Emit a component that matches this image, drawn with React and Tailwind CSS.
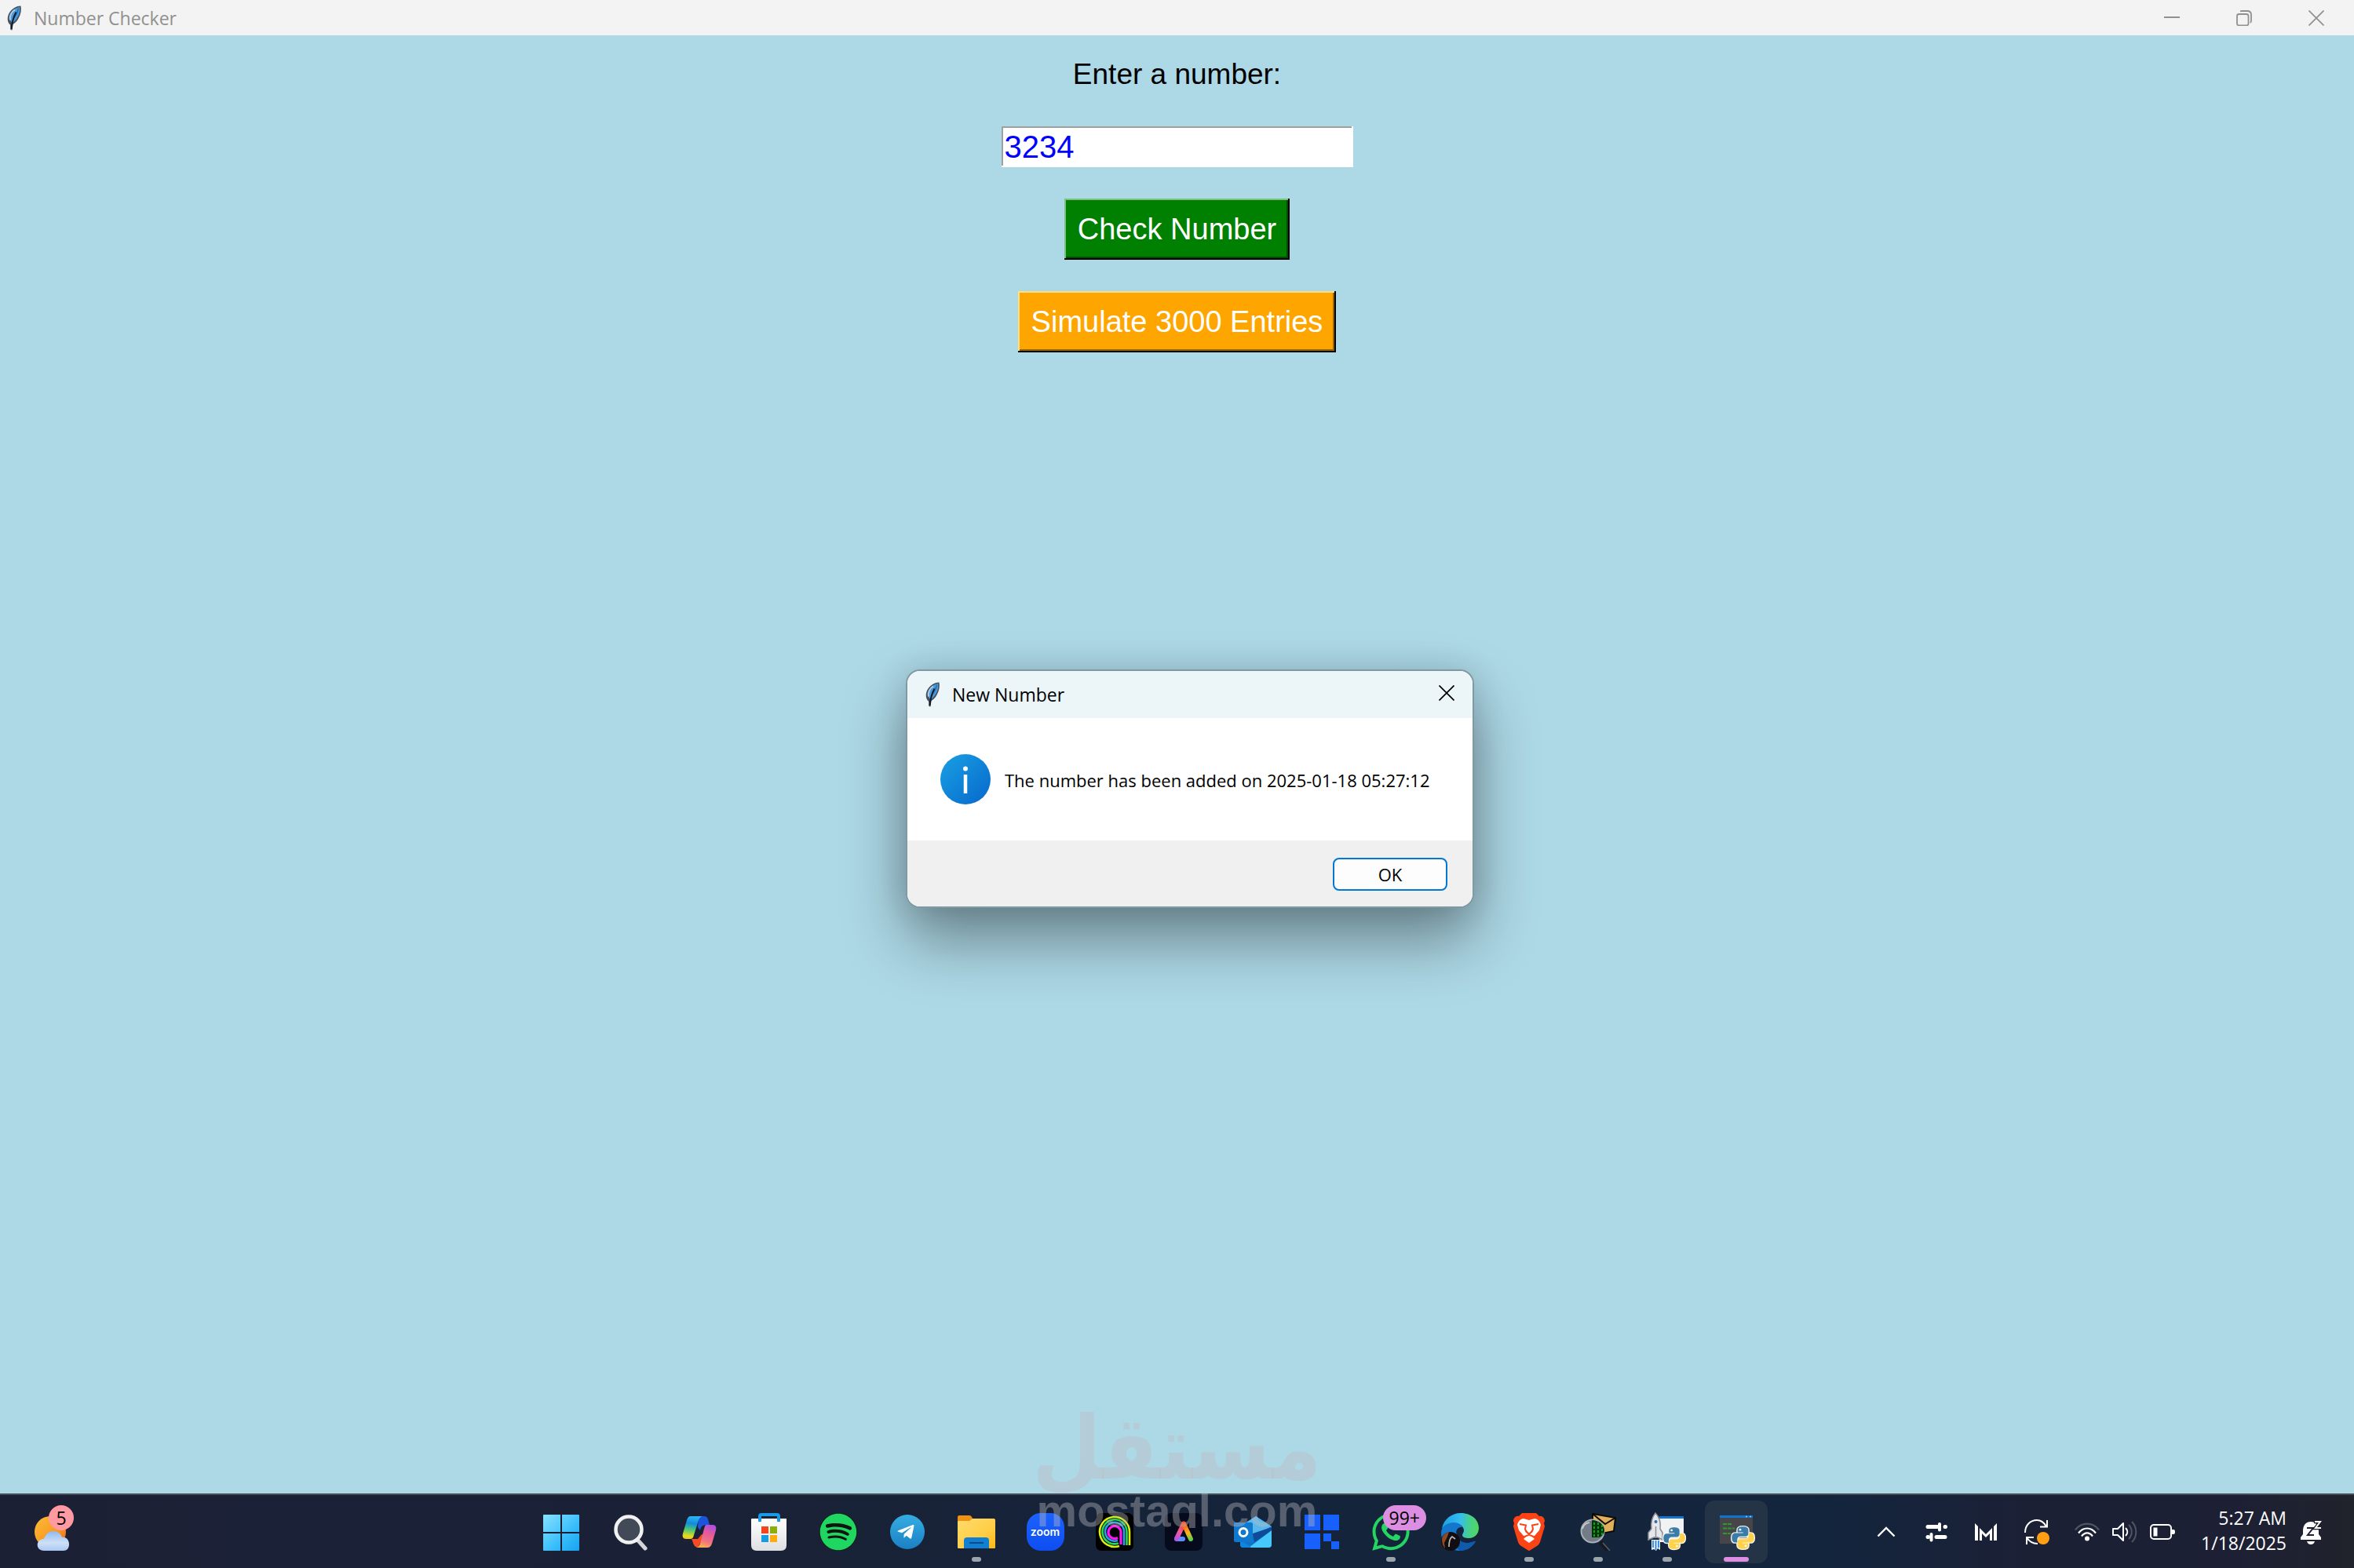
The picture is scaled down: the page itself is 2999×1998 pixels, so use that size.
import { useState } from 'react';
import { FaSpotify, FaTelegramPlane, FaWhatsapp } from 'react-icons/fa';

function Feather() {
  return (
    <svg className="h-8 w-5 shrink-0" viewBox="0 0 20 32" aria-hidden="true">
      <path d="M18.500 0.500c1 5 0 11-3 16-1.500 3-4 6-7 7.500L7.500 31.500l-2-.5-.5-6.500C1.500 22 .8 16 3 11 6 5 12 .5 18.500.5z" fill="#46505e" />
      <path d="M17 2c.8 5-.5 9.500-3 13.500-1.500 3-3.500 5-6 6.500C4.500 20 2.500 16 4.500 11.500 7 6 12 3 17 2z" fill="#4a9bdd" />
      <path d="M11 5.500c-4 2.500-7 7.500-6 13" stroke="#b9cbdc" strokeWidth="2" fill="none" />
      <path d="M15.500 3.500c-1 5-3 9-5.500 12" stroke="#2a70b4" strokeWidth="1.500" fill="none" />
      <path d="M12.500 8.500C9.500 14 7.500 20 6.500 30" stroke="#121a26" strokeWidth="2" fill="none" />
    </svg>
  );
}

function CloseIcon() {
  return (
    <svg className="h-5 w-5" viewBox="0 0 20 20" stroke="currentColor" strokeWidth="1.700" aria-hidden="true">
      <path d="M0.500 0.500l19 19M19.500 0.500l-19 19" />
    </svg>
  );
}

function Python({ x, y, size }) {
  const half = 'M12 0C8 0 6.200 1.200 6.200 3.500V6h6v1H3.800C1.200 7 0 9 0 12s1.200 5 3.400 5h2.400v-3c0-2 1.600-3.400 3.500-3.400h5.500c1.700 0 3-1.300 3-3V3.500C17.800 1.200 15.500 0 12 0z';
  return (
    <svg x={x} y={y} width={size} height={size} viewBox="-2 -2 28 28">
      <g fill="#fff" stroke="#f2f2ee" strokeWidth="2.500" strokeLinejoin="round">
        <path d={half} />
        <path d={half} transform="rotate(180 12 12)" />
      </g>
      <path d={half} fill="#3b7ba8" />
      <path d={half} transform="rotate(180 12 12)" fill="#ffd24a" />
      <circle cx="9" cy="3.200" r="1.200" fill="#fff" />
      <circle cx="15" cy="20.800" r="1.200" fill="#fff" />
    </svg>
  );
}

function StartIcon() {
  return (
    <svg className="h-12 w-12" viewBox="0 0 48 48">
      <defs>
        <linearGradient id="start" x1="0" y1="0" x2="48" y2="48" gradientUnits="userSpaceOnUse">
          <stop stopColor="#8be3ff" />
          <stop offset=".6" stopColor="#38bdfb" />
          <stop offset="1" stopColor="#16a2ee" />
        </linearGradient>
      </defs>
      <path d="M0 3q0-1 1-1h21v22H0zM24 2h21q1 0 1 1v21H24zM0 26h22v22H1q-1 0-1-1zM24 26h22v21q0 1-1 1H24z" fill="url(#start)" />
    </svg>
  );
}

function SearchIcon() {
  return (
    <svg className="h-12 w-12" viewBox="0 0 48 48">
      <path d="M33 35l9 10" stroke="#d3d5d8" strokeWidth="5" strokeLinecap="round" />
      <circle cx="21" cy="21" r="16.500" fill="#424a58" stroke="#f1f1f2" strokeWidth="4.500" />
    </svg>
  );
}

function CopilotIcon() {
  return (
    <svg className="h-12 w-12" viewBox="0 0 48 48">
      <defs>
        <linearGradient id="copA" x1="12" y1="4" x2="8" y2="34" gradientUnits="userSpaceOnUse">
          <stop stopColor="#2db4f2" />
          <stop offset=".3" stopColor="#118bdc" />
          <stop offset=".55" stopColor="#47c47c" />
          <stop offset=".85" stopColor="#e6dc1c" />
          <stop offset="1" stopColor="#f8b52b" />
        </linearGradient>
        <linearGradient id="copB" x1="40" y1="15" x2="30" y2="44" gradientUnits="userSpaceOnUse">
          <stop stopColor="#a64fe8" />
          <stop offset=".4" stopColor="#e65b97" />
          <stop offset=".75" stopColor="#f07580" />
          <stop offset="1" stopColor="#fdaa51" />
        </linearGradient>
      </defs>
      <path d="M22 4h7c3 0 4 1 5 4l2 7h-4c-5 0-7 2-8 7l-3-4z" fill="#1a55dc" />
      <path d="M13 33h8l5-6 3 2-8 15c-4-1-5-3-6-6l-1-3z" fill="#fb4a23" />
      <path d="M12 4h16c-3 0-5 2-6 5l-6 19c-1 4-2 5-5 5H6c-4 0-5-3-4-7L7 9c1-3 2-5 5-5z" fill="url(#copA)" />
      <path d="M32 15h8c4 0 5 3 4 7l-5 17c-1 3-3 5-6 5H18c3 0 5-2 6-5l5-19c1-3 1-5 3-5z" fill="url(#copB)" />
    </svg>
  );
}

function StoreIcon() {
  return (
    <svg className="h-12 w-12" viewBox="0 0 48 48">
      <defs>
        <linearGradient id="store" x1="0" y1="0" x2="0" y2="1">
          <stop stopColor="#fff" />
          <stop offset="1" stopColor="#dedfe1" />
        </linearGradient>
      </defs>
      <path d="M2 7h44v34q0 7-7 7H8q-7 0-7-7V8q0-1 1-1z" fill="url(#store)" />
      <path d="M12 11V4q0-2 2-2h20q2 0 2 2v7" fill="none" stroke="#1a9be6" strokeWidth="4" />
      <path d="M14 17h9v9h-9z" fill="#f5441f" />
      <path d="M25 17h9v9h-9z" fill="#8cae08" />
      <path d="M14 28h9v9h-9z" fill="#149de4" />
      <path d="M25 28h9v9h-9z" fill="#ffac0a" />
    </svg>
  );
}

function SpotifyIcon() {
  return (
    <span className="flex h-12 w-12 rounded-full bg-[#0e1410]">
      <FaSpotify size={48} color="#1fd660" />
    </span>
  );
}

function TelegramIcon() {
  return (
    <span className="flex h-11 w-11 items-center justify-center rounded-full bg-linear-to-b from-[#35ade2] to-[#1b80c4]">
      <FaTelegramPlane className="mr-1 h-6 w-6 text-white" />
    </span>
  );
}

function FolderIcon() {
  return (
    <svg className="h-12 w-12" viewBox="0 0 48 48">
      <defs>
        <linearGradient id="folder" x1="0" y1="0" x2="1" y2="1">
          <stop stopColor="#ffda6b" />
          <stop offset=".6" stopColor="#ffce47" />
          <stop offset="1" stopColor="#fbb714" />
        </linearGradient>
      </defs>
      <path d="M0 5q0-2 2-2h13q2 0 3 2l2 4v4H0z" fill="#f0920f" />
      <path d="M0 11q0-1 2-1h13l4-3h27q2 0 2 2v35q0 1-1 1H1q-1 0-1-1z" fill="url(#folder)" />
      <path d="M8 45V35q0-4 4-4h24q4 0 4 4v10z" fill="#1180d2" />
      <path d="M15 38h18" stroke="#0c4b87" strokeWidth="2" />
    </svg>
  );
}

function ZoomIcon() {
  return (
    <span className="flex h-12 w-12 items-center justify-center rounded-[18px] bg-linear-to-b from-[#1c62ff] to-[#0f4df0] font-['Inter'] text-[14px] leading-5 font-semibold text-white">
      zoom
    </span>
  );
}

function RingsIcon() {
  return (
    <svg className="h-12 w-12" viewBox="0 0 48 48" fill="none" strokeWidth="2.600">
      <rect width="48" height="48" rx="7" fill="#000" />
      <path d="M43 41V24A19 19 0 1 0 30 42" stroke="#d9ee13" />
      <path d="M39.500 41V24A15.500 15.500 0 1 0 29 38.500" stroke="#27d65b" />
      <path d="M36 41V24A12 12 0 1 0 28 35" stroke="#2b9fee" />
      <path d="M32 40V24a8 8 0 1 0-4 7.500" stroke="#fb16f2" strokeWidth="3.200" />
    </svg>
  );
}

function AdobeIcon() {
  return (
    <svg className="h-12 w-12" viewBox="0 0 48 48">
      <defs>
        <linearGradient id="adobeL" x1="24" y1="12" x2="14" y2="36" gradientUnits="userSpaceOnUse">
          <stop stopColor="#f63b1d" />
          <stop offset=".5" stopColor="#ef5b9c" />
          <stop offset="1" stopColor="#b54bf5" />
        </linearGradient>
        <linearGradient id="adobeR" x1="24" y1="12" x2="34" y2="36" gradientUnits="userSpaceOnUse">
          <stop stopColor="#fb3d16" />
          <stop offset=".55" stopColor="#fbb41c" />
          <stop offset="1" stopColor="#3ed256" />
        </linearGradient>
      </defs>
      <rect width="48" height="48" rx="8" fill="#050b1c" />
      <path d="M15 33h8" stroke="#5b8ffa" strokeWidth="6" strokeLinecap="round" />
      <path d="M24 13.500l-9 19" stroke="url(#adobeL)" strokeWidth="6" strokeLinecap="round" />
      <path d="M24 13.500l9 19.500" stroke="url(#adobeR)" strokeWidth="6" strokeLinecap="round" />
    </svg>
  );
}

function OutlookIcon() {
  return (
    <svg className="h-12 w-12" viewBox="0 0 48 48">
      <path d="M28 4l20 13v23q0 4-4 4H12q-4 0-4-4V17z" fill="#1272c8" />
      <path d="M28 4L9 16l17 12 22-11z" fill="#56b8ef" />
      <path d="M24 26l24-8v5L26 37z" fill="#0d4c98" />
      <path d="M48 22v18q0 4-4 4H19z" fill="#45c8fb" />
      <path d="M8 34l14 10H12q-4 0-4-4z" fill="#0f86dc" />
      <rect y="12" width="24" height="25" rx="2" fill="#0f79d0" />
      <circle cx="12" cy="24.500" r="5" fill="none" stroke="#fff" strokeWidth="3" />
    </svg>
  );
}

function BlocksIcon() {
  return (
    <svg className="h-12 w-12" viewBox="0 0 48 48" fill="#1760fb">
      <path d="M2 2h20v20H2zM26 2h20v20H26zM2 26h20v20H2zM26 26h10v10H26zM36 36h10v10H36z" />
    </svg>
  );
}

function WhatsappIcon() {
  return <FaWhatsapp size={54} color="#24d562" className="shrink-0" />;
}

function EdgeIcon() {
  return (
    <svg className="h-12 w-12" viewBox="0 0 48 48">
      <defs>
        <linearGradient id="edge" x1="0" y1="12" x2="48" y2="16" gradientUnits="userSpaceOnUse">
          <stop stopColor="#1a9ee2" />
          <stop offset=".5" stopColor="#35bdee" />
          <stop offset=".75" stopColor="#46d08d" />
          <stop offset="1" stopColor="#53d660" />
        </linearGradient>
      </defs>
      <path d="M1 20C3 8 13 0 25 0c14 0 23 9 23 19 0 8-6 13-12 13-5 0-9-1-9-4 0-2 2-3 2-6 0-5-5-8-11-8C10 14 4 16 1 20z" fill="url(#edge)" />
      <path d="M0 25c0-8 8-13 16-13 6 0 10 3 12 6-6-1-9 3-9 8 0 8 8 13 16 12 4 0 6-2 9-2-4 7-11 12-20 12C10 48 0 38 0 25z" fill="#1477ce" />
      <path d="M20 24c-1 9 6 15 15 14 4-1 6-2 9-2-4 7-11 12-20 12-6-4-9-16-4-24z" fill="#0f5aac" />
      <circle cx="12" cy="36" r="12" fill="#120d10" />
      <path d="M1 33c1-5 5-8 9-9l-2 6-4 8 1 7c-3-3-4-7-4-12z" fill="#8f4a24" />
      <path d="M10 43c0-7 1-11 4-13l4 3" stroke="#b8b4b2" strokeWidth="1.800" fill="none" />
    </svg>
  );
}

function BraveIcon() {
  return (
    <svg className="h-12 w-12" viewBox="0 0 48 48">
      <path d="M15 0h18l4 4c4-1 7 3 7 6l-1 3 1 4-6 20q-1 3-4 5l-8 5q-2 2-4 0l-8-5q-3-2-4-5L4 17l1-4-1-3c0-3 3-7 7-6z" fill="#fb4315" />
      <path d="M17 7l7 2 7-2c4 0 7 4 8 8l-2 7-6 7-3 1 3 3-7 5-7-5 3-3-3-1-6-7-2-7c1-4 4-8 8-8z" fill="#fff" />
      <path d="M12 14l8 1.500-1 5 2 4M36 14l-8 1.500 1 5-2 4" fill="none" stroke="#fb4315" strokeWidth="2" />
      <path d="M20 23l4 4 4-4M16 31l8-3.500 8 3.500M24 26v2" fill="none" stroke="#fb4315" strokeWidth="2" />
      <path d="M9 27l7 4-2 4zM39 27l-7 4 2 4z" fill="#fb4315" />
    </svg>
  );
}

function MailSearchIcon() {
  return (
    <svg className="h-12 w-12" viewBox="0 0 48 48">
      <path d="M27 37l11 13" stroke="#17191f" strokeWidth="5" />
      <path d="M30 38l9 10" stroke="#5b5f68" strokeWidth="1.500" />
      <path d="M17 1l29 5-2 17-15 3-12-8z" fill="#e3b05a" stroke="#0b0b0b" strokeWidth="2" />
      <path d="M17 1l16 13 13-8" fill="none" stroke="#0b0b0b" strokeWidth="2" />
      <circle cx="17" cy="23" r="14.500" fill="#727b86" stroke="#a8b0b8" strokeWidth="2" />
      <path d="M16 9c9 0 16 6 16 13 0 4-3 8-7 9h-9z" fill="#06350c" />
      <path d="M19 12v18M24 12v18M29 15v13" stroke="#12a01f" strokeWidth="2" strokeDasharray="3 2" />
      <path d="M4 20c1-4 4-7 9-8" stroke="#c9ced3" strokeWidth="1.500" fill="none" />
    </svg>
  );
}

function RocketIcon() {
  return (
    <svg className="h-12 w-12 overflow-visible" viewBox="0 0 48 48">
      <path d="M14 4h31v33H14z" fill="#f1f2f3" />
      <path d="M14 4h31v3H14z" fill="#1674d0" />
      <path d="M4 34h11v13l-3-2-2 3-3-2-3 1z" fill="#e8f3fd" />
      <path d="M6 35v9M9.500 35v12M13 35v9" stroke="#2f83d8" strokeWidth="1.800" />
      <path d="M9 0c5 5 7 12 6 20l3 5v9l-6-3H7l-7 3v-9l4-5C3 12 5 5 9 0z" fill="#e6e7ea" stroke="#8b8e96" strokeWidth="1.500" />
      <path d="M9.500 17v15" stroke="#8b8e96" strokeWidth="1.500" />
      <circle cx="9.500" cy="11" r="2" fill="#2a6fb5" />
      <Python x="17" y="16" size="32" />
    </svg>
  );
}

function ConsoleIcon() {
  return (
    <svg className="h-12 w-12 overflow-visible" viewBox="0 0 48 48">
      <path d="M3 3h42v36H3z" fill="#45454a" />
      <path d="M3 3h42v3H3z" fill="#1173d1" />
      <path d="M36 4.500h2M41 4.500h2" stroke="#8fc4f2" strokeWidth="1.500" />
      <path d="M7 14h12M7 19.500h15M7 26h10" stroke="#2f9a2b" strokeWidth="1.800" strokeDasharray="5 1" />
      <Python x="16" y="15" size="33" />
    </svg>
  );
}

const apps = [
  { name: 'Start', icon: StartIcon },
  { name: 'Search', icon: SearchIcon },
  { name: 'Copilot', icon: CopilotIcon },
  { name: 'Store', icon: StoreIcon },
  { name: 'Spotify', icon: SpotifyIcon },
  { name: 'Telegram', icon: TelegramIcon },
  { name: 'File Explorer', icon: FolderIcon, running: true },
  { name: 'Zoom', icon: ZoomIcon },
  { name: 'Anghami', icon: RingsIcon },
  { name: 'Adobe', icon: AdobeIcon },
  { name: 'Outlook', icon: OutlookIcon },
  { name: 'Blocks', icon: BlocksIcon },
  { name: 'WhatsApp', icon: WhatsappIcon, running: true, badge: '99+' },
  { name: 'Edge', icon: EdgeIcon },
  { name: 'Brave', icon: BraveIcon, running: true },
  { name: 'Mail Search', icon: MailSearchIcon, running: true },
  { name: 'Python Launcher', icon: RocketIcon, running: true },
  { name: 'Number Checker', icon: ConsoleIcon, active: true },
];

function TaskbarApp({ app }) {
  const Icon = app.icon;
  return (
    <div className="flex w-[88px] justify-center">
      <button
        type="button"
        aria-label={app.name}
        className={`relative flex h-20 w-20 items-center justify-center rounded-xl ${app.active ? 'bg-[#243345]' : ''}`}
      >
        <Icon />
        {app.running && <span className="absolute bottom-0.5 h-1.5 w-3 rounded-full bg-[#9ba4ab]" />}
        {app.active && <span className="absolute bottom-0.5 h-1.5 w-8 rounded-full bg-[#dc8fe2]" />}
        {app.badge && (
          <span className="absolute top-1.5 left-[30px] rounded-full bg-[#dc8fe2] px-2 text-[23px] leading-8 text-black">
            {app.badge}
          </span>
        )}
      </button>
    </div>
  );
}

function Weather() {
  return (
    <button type="button" aria-label="Weather" className="relative h-20 w-[52px]">
      <svg className="h-20 w-[52px]" viewBox="0 0 52 80">
        <defs>
          <linearGradient id="sun" x1="0" y1="0" x2="1" y2="1">
            <stop stopColor="#fdbb3a" />
            <stop offset=".6" stopColor="#f79a1f" />
            <stop offset="1" stopColor="#ef5a1a" />
          </linearGradient>
          <linearGradient id="cloud" x1="0" y1="0" x2="0" y2="1">
            <stop stopColor="#8fb9f2" />
            <stop offset=".6" stopColor="#cfe0f7" />
            <stop offset="1" stopColor="#a9c8f4" />
          </linearGradient>
        </defs>
        <circle cx="20" cy="40" r="20" fill="url(#sun)" />
        <path d="M12 64c-11 0-11-15 0-15 2-6 6-10 12-10s10 4 11 8c5-1 9 3 9 9 0 5-3 8-7 8z" fill="url(#cloud)" />
      </svg>
      <span className="absolute top-1.5 left-[18px] h-8 w-8 rounded-full bg-[#ff9aa3] text-center text-[23px] leading-8 text-black">5</span>
    </button>
  );
}

function Tray() {
  return (
    <div className="flex flex-1 items-center justify-end pr-[38px] text-white">
      <button type="button" aria-label="Show hidden icons" className="flex w-16 justify-center">
        <svg className="h-8 w-8" viewBox="0 0 32 32" fill="none" stroke="currentColor" strokeWidth="2.400">
          <path d="M5.500 21.500L16 11l10.500 10.500" />
        </svg>
      </button>
      <button type="button" aria-label="Controls" className="flex w-16 justify-center">
        <svg className="h-8 w-8" viewBox="0 0 32 32" stroke="currentColor" strokeLinecap="round">
          <path d="M5 9.500h12M27 9.500h.5M5 22.500h.5M16 22.500h11" strokeWidth="5" />
          <path d="M20 6v7.500M9.500 19v7.500" strokeWidth="4" />
          <path d="M3 9.500h17M9.500 22.500H5" strokeWidth="3" strokeLinecap="butt" />
        </svg>
      </button>
      <button type="button" aria-label="Monitor" className="flex w-16 justify-center">
        <svg className="h-8 w-8" viewBox="0 0 32 32" fill="currentColor">
          <path d="M1 5l4 4v18H1zM29 5v22h-4V9zM7 27V11l8 8 8-8v16h-3v-9l-5 5-5-5v9z" />
        </svg>
      </button>
      <button type="button" aria-label="Updates" className="flex w-16 justify-center">
        <svg className="h-8 w-8" viewBox="0 0 32 32" fill="none" stroke="currentColor" strokeWidth="2">
          <path d="M1 17C1 7 8 1 16 1c5 0 9 3 12 8M29 1v8.500H20M3 32v-9h9M3 23c3 5 7 8 14 8" />
          <circle cx="24" cy="24" r="8" fill="#ffa014" stroke="none" />
        </svg>
      </button>
      <button type="button" aria-label="Quick settings" className="ml-2 flex">
        <span className="flex w-12 justify-center">
          <svg className="h-8 w-8" viewBox="0 0 32 32" fill="none" stroke="currentColor" strokeWidth="2.200">
            <path d="M.8 13.500C9 3 23 3 31.200 13.500" stroke="#50555f" />
            <path d="M5 17.500c6-8 16-8 22 0M9 21.500c4-5.500 10-5.500 14 0" />
            <circle cx="16" cy="24.500" r="3" fill="currentColor" stroke="none" />
          </svg>
        </span>
        <span className="flex w-12 justify-center">
          <svg className="h-8 w-8" viewBox="0 0 32 32" fill="none" stroke="currentColor" strokeWidth="2" strokeLinejoin="round">
            <path d="M1 12h6l7-7v22l-7-7H1z" />
            <path d="M17 11c3 3 3 7 0 10" />
            <path d="M21 7c5 5 5 13 0 18M25 3c7 7 7 19 0 26" stroke="#50555f" />
          </svg>
        </span>
        <span className="flex w-12 justify-center">
          <svg className="h-8 w-8" viewBox="0 0 32 32" fill="none" stroke="currentColor" strokeWidth="2">
            <rect x="1" y="7" width="26" height="18" rx="4" />
            <path d="M4.500 10.500h5v11h-5zM28 13h2q2 0 2 3t-2 3h-2z" fill="currentColor" stroke="none" />
          </svg>
        </span>
      </button>
      <button type="button" className="w-[134px] pb-1 text-right text-[23px] leading-8">
        5:27 AM
        <br />
        1/18/2025
      </button>
      <button type="button" aria-label="Notifications" className="ml-4 flex">
        <svg className="h-8 w-8" viewBox="0 0 32 32">
          <path d="M5 15C5 7 9 3 15 3s10 4 10 12v4l3 4v3H2v-3l3-4zM10 28h10c-1 3-3 4-5 4s-4-1-5-4z" fill="#fff" />
          <path d="M10 11h8l-7 9h8" fill="none" stroke="#1d2130" strokeWidth="2" />
          <path d="M19 3h8l-6 8h8" fill="none" stroke="#1d2130" strokeWidth="4.500" />
          <path d="M20 3h7l-6 8h7" fill="none" stroke="#fff" strokeWidth="2" />
        </svg>
      </button>
    </div>
  );
}

function MessageBox({ onClose }) {
  return (
    <div
      role="dialog"
      aria-labelledby="msg-title"
      className="absolute top-[853px] left-[1154px] w-[724px] overflow-hidden rounded-[18px] border-2 border-[#809aa3] bg-white text-black shadow-[0_40px_80px_rgba(0,0,0,0.4),0_0_40px_rgba(0,0,0,0.12)]"
    >
      <div className="flex h-[60px] items-start bg-[#ecf5f8] pr-[23px] pl-[22px]">
        <div className="flex flex-1 items-center gap-[15px] pt-3">
          <Feather />
          <h2 id="msg-title" className="text-[23px] leading-9">New Number</h2>
        </div>
        <button type="button" aria-label="Close" onClick={onClose} className="pt-[18px]">
          <CloseIcon />
        </button>
      </div>
      <div className="flex h-[156px] items-center gap-[18px] px-[42px]">
        <svg className="h-16 w-16 shrink-0" viewBox="0 0 64 64" aria-hidden="true">
          <defs>
            <linearGradient id="info" x1="0" y1="0" x2="1" y2="1">
              <stop stopColor="#1aa0e4" />
              <stop offset="1" stopColor="#0668cb" />
            </linearGradient>
          </defs>
          <circle cx="32" cy="32" r="32" fill="url(#info)" />
          <circle cx="32" cy="18.500" r="3" fill="#fff" />
          <path d="M32 26v24" stroke="#fff" strokeWidth="4.500" />
        </svg>
        <p className="pt-0.5 text-[22px] leading-8 whitespace-nowrap">The number has been added on 2025-01-18 05:27:12</p>
      </div>
      <div className="flex h-[84px] items-center justify-end bg-[#f0f0f0] pt-0.5 pr-8">
        <button
          type="button"
          onClick={onClose}
          className="h-[42px] w-[146px] rounded-lg border-2 border-[#0078d4] bg-[#fdfdfd] text-[22px] leading-8"
        >
          OK
        </button>
      </div>
    </div>
  );
}

function Watermark() {
  return (
    <div className="pointer-events-none absolute bottom-[51px] left-1/2 -translate-x-1/2 text-center font-bold whitespace-nowrap text-[#bebcc0]/40">
      <p lang="ar" dir="rtl" className="-mb-2 font-['DejaVu_Sans_Condensed','DejaVu_Sans',sans-serif] text-[112px] leading-[112px]">مستقل</p>
      <p className="h-[54px] overflow-hidden font-['Liberation_Sans',sans-serif] text-[58px] leading-[64px]">mostaql.com</p>
    </div>
  );
}

export default function App() {
  const [number, setNumber] = useState('3234');
  const [showMessage, setShowMessage] = useState(true);

  return (
    <div className="relative flex min-h-screen flex-col overflow-hidden bg-[#add8e6] font-['Open_Sans',sans-serif]">
      <header className="flex h-[45px] items-center bg-[#f3f3f3] pr-0.5 text-[#909090]">
        <div className="flex flex-1 items-center gap-[15px] pl-2">
          <Feather />
          <h1 className="text-[23px] leading-8">Number Checker</h1>
        </div>
        <button type="button" aria-label="Minimize" className="flex w-[92px] justify-center">
          <svg className="h-5 w-5" viewBox="0 0 20 20" stroke="currentColor" strokeWidth="2">
            <path d="M0 9h20" />
          </svg>
        </button>
        <button type="button" aria-label="Restore" className="flex w-[92px] justify-center">
          <svg className="h-5 w-5" viewBox="0 0 20 20" fill="none" stroke="currentColor" strokeWidth="1.800">
            <rect x="1" y="5" width="14.500" height="14.500" rx="2.500" />
            <path d="M5 1.500Q6 1 7 1h7q5 0 5 5v7q0 2-1 3" />
          </svg>
        </button>
        <button type="button" aria-label="Close" className="flex w-[92px] justify-center">
          <CloseIcon />
        </button>
      </header>

      <main className="flex flex-1 flex-col items-center gap-10 pt-6 font-['Liberation_Sans',sans-serif] text-[38px] leading-[56px]">
        <label htmlFor="number" className="text-[37px] leading-[52px] text-black">Enter a number:</label>
        <input
          id="number"
          type="text"
          value={number}
          onChange={(e) => setNumber(e.target.value)}
          className="h-[52px] w-[448px] bg-white px-1 text-[40px] leading-[48px] text-[#0000ff] shadow-[inset_-2px_-2px_0_#fff,inset_2px_2px_0_#a0a0a0] outline-none"
        />
        <button
          type="button"
          onClick={() => setShowMessage(true)}
          className="h-[78px] bg-[#008000] px-[17px] text-white shadow-[inset_-2px_-2px_0_#000,inset_2px_2px_0_#7fc07f,inset_-4px_-4px_0_#004c00]"
        >
          Check Number
        </button>
        <button
          type="button"
          className="h-[78px] bg-[#ffa500] px-[17px] text-white shadow-[inset_-2px_-2px_0_#000,inset_2px_2px_0_#ffdf80,inset_-4px_-4px_0_#996300]"
        >
          Simulate 3000 Entries
        </button>
      </main>

      {showMessage && <MessageBox onClose={() => setShowMessage(false)} />}

      <footer className="flex h-[95px] items-center border-t-2 border-[#454b57] bg-linear-[90deg,#1b2035_0%,#1a2136_28%,#14243a_55%,#13253d_78%,#1b2035_86%,#1d2034_95%,#20232b_100%]">
        <div className="flex flex-1 pl-11">
          <Weather />
        </div>
        <nav className="flex pr-[78px]" aria-label="Taskbar">
          {apps.map((app) => (
            <TaskbarApp key={app.name} app={app} />
          ))}
        </nav>
        <Tray />
      </footer>

      <Watermark />
    </div>
  );
}
